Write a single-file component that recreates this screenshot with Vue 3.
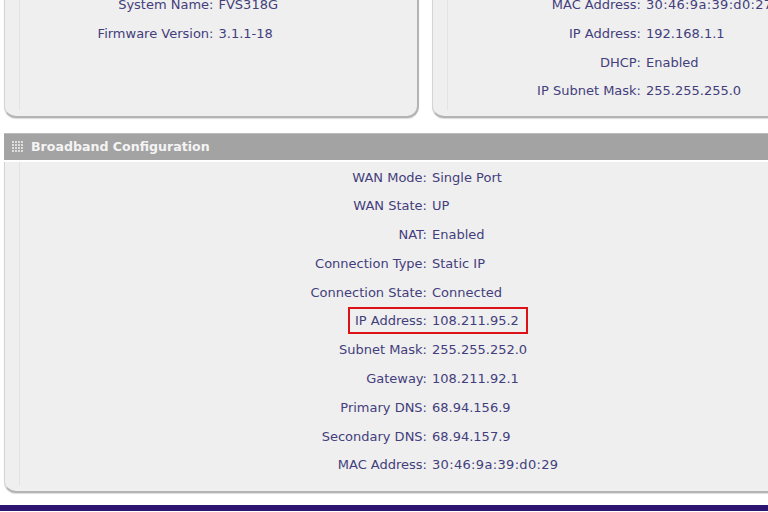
<script setup>
const system = [
  ['System Name', 'FVS318G'],
  ['Firmware Version', '3.1.1-18'],
]
const lan = [
  ['MAC Address', '30:46:9a:39:d0:27'],
  ['IP Address', '192.168.1.1'],
  ['DHCP', 'Enabled'],
  ['IP Subnet Mask', '255.255.255.0'],
]
const wan = [
  ['WAN Mode', 'Single Port'],
  ['WAN State', 'UP'],
  ['NAT', 'Enabled'],
  ['Connection Type', 'Static IP'],
  ['Connection State', 'Connected'],
  ['IP Address', '108.211.95.2', true],
  ['Subnet Mask', '255.255.252.0'],
  ['Gateway', '108.211.92.1'],
  ['Primary DNS', '68.94.156.9'],
  ['Secondary DNS', '68.94.157.9'],
  ['MAC Address', '30:46:9a:39:d0:29'],
]
const dots = []
for (let y = 0; y < 4; y++) for (let x = 0; x < 4; x++) dots.push([x * 3, y * 3])
const isMac = (v) => v.includes(':')
</script>

<template>
  <div class="page">
    <div class="top">
      <section class="card sys">
        <div v-for="r in system" :key="r[0]" class="row"><span class="k">{{ r[0] }}:</span><span>{{ r[1] }}</span></div>
      </section>
      <section class="card lan">
        <div v-for="r in lan" :key="r[0]" class="row"><span class="k">{{ r[0] }}:</span><span :class="{ mac: isMac(r[1]) }">{{ r[1] }}</span></div>
      </section>
    </div>
    <header class="bar">
      <svg width="11" height="11" viewBox="0 0 11 11" class="grip">
        <rect v-for="d in dots" :key="d.join()" :x="d[0]" :y="d[1]" width="2" height="2" fill="#dedede" />
      </svg>
      <span>Broadband Configuration</span>
    </header>
    <section class="card wan">
      <div v-for="r in wan" :key="r[0] + r[1]" class="row">
        <span class="k">{{ r[0] }}:</span><span :class="{ mac: isMac(r[1]) }">{{ r[1] }}</span>
        <i v-if="r[2]" class="mark"></i>
      </div>
    </section>
    <footer class="foot"></footer>
  </div>
</template>

<style scoped>
.page {
  width: 856px;
  height: 512px;
  padding-left: 4px;
  box-sizing: border-box;
  overflow: hidden;
  font-family: "DejaVu Sans", Verdana, sans-serif;
  font-size: 13px;
  color: #433e7c;
}
.top {
  display: grid;
  grid-template-columns: 415px 420px;
  column-gap: 13px;
  height: 127px;
  margin-top: -9px;
}
.card {
  position: relative;
  background: #efefef;
  border: 1px solid #d4d4d4;
  border-bottom: 2px solid #b4b4b4;
  border-right: 2px solid #b4b4b4;
  border-radius: 0 0 12px 12px;
  border-top: 0;
  box-sizing: border-box;
  height: 127px;
  box-shadow: 0 1px 1px #dcdcdc;
}
.sys { padding-left: 10px; }
.lan { padding-left: 4px; }
.card::before {
  content: "";
  position: absolute;
  left: 14px;
  top: 0;
  bottom: 6px;
  width: 1px;
  background: #e3e3e3;
}
.row {
  position: relative;
  display: grid;
  grid-template-columns: 1fr 1fr;
  column-gap: 5px;
  height: 28.8px;
  line-height: 28.8px;
  white-space: nowrap;
}
.k { text-align: right; }
.mac { letter-spacing: 0.33px; }
.bar {
  display: flex;
  align-items: center;
  gap: 8px;
  height: 27px;
  margin-top: 15px;
  padding: 0 0 2px 8px;
  background: #a3a3a3;
  border-top: 1px solid #bcbcbc;
  box-sizing: border-box;
  color: #f4f4f4;
  font-size: 12.6px;
  font-weight: 700;
}
.wan {
  height: 331px;
  margin-top: 2px;
  padding-top: 1.5px;
}
.mark {
  position: absolute;
  left: 343px;
  width: 180px;
  top: 0;
  height: 27px;
  box-sizing: border-box;
  border: 2px solid #dc1216;
}
.foot {
  height: 6px;
  margin: 12px 0 0 -4px;
  background: #2d1470;
}
</style>
